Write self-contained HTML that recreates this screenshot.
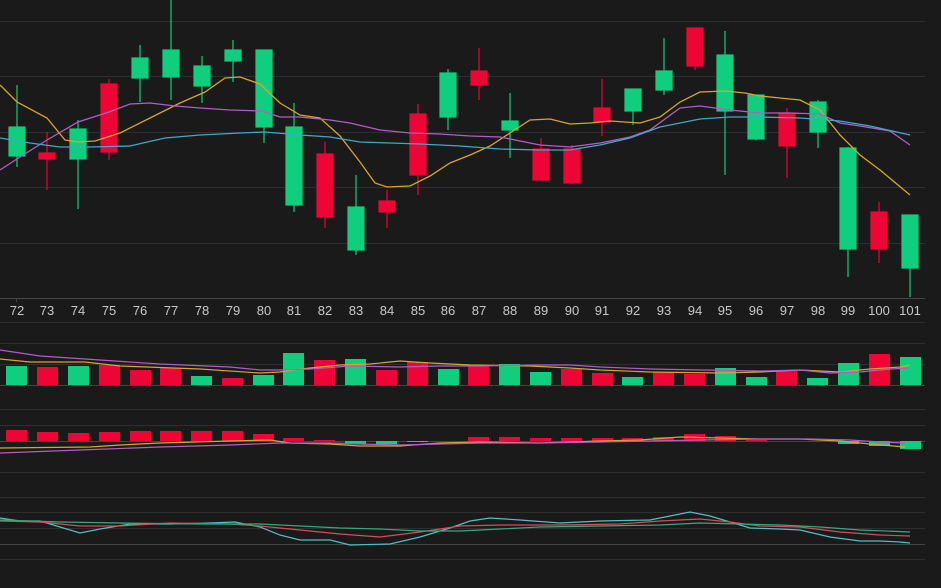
<!DOCTYPE html>
<html><head><meta charset="utf-8"><style>
html,body{margin:0;padding:0;background:#1a1a1a;width:941px;height:588px;overflow:hidden}
svg{display:block}
text{font-family:"Liberation Sans",sans-serif;font-size:13px;fill:#c8c8c8}
</style></head><body>
<svg width="941" height="588" viewBox="0 0 941 588">
<rect width="941" height="588" fill="#1a1a1a"/>
<g stroke="#2e2e2e" stroke-width="1">
<line x1="0" y1="21.5" x2="925" y2="21.5"/><line x1="0" y1="76.5" x2="925" y2="76.5"/>
<line x1="0" y1="132.5" x2="925" y2="132.5"/><line x1="0" y1="187.5" x2="925" y2="187.5"/>
<line x1="0" y1="243.5" x2="925" y2="243.5"/>
<line x1="0" y1="322.5" x2="925" y2="322.5"/><line x1="0" y1="343.5" x2="925" y2="343.5"/>
<line x1="0" y1="364.5" x2="925" y2="364.5"/>
<line x1="0" y1="409.5" x2="925" y2="409.5"/><line x1="0" y1="425.5" x2="925" y2="425.5"/>
<line x1="0" y1="472.5" x2="925" y2="472.5"/><line x1="0" y1="497.5" x2="925" y2="497.5"/>
<line x1="0" y1="512.5" x2="925" y2="512.5"/><line x1="0" y1="528.5" x2="925" y2="528.5"/>
<line x1="0" y1="559.5" x2="925" y2="559.5"/>
</g>
<g stroke="#444" stroke-width="1">
<line x1="0" y1="298.5" x2="925" y2="298.5"/><line x1="0" y1="385.5" x2="925" y2="385.5"/>
<line x1="0" y1="441.5" x2="925" y2="441.5"/><line x1="0" y1="544.5" x2="925" y2="544.5"/>
</g>
<g font-size="13" text-anchor="middle">
<text x="17" y="315">72</text><text x="47" y="315">73</text><text x="78" y="315">74</text><text x="109" y="315">75</text><text x="140" y="315">76</text><text x="171" y="315">77</text><text x="202" y="315">78</text><text x="233" y="315">79</text><text x="264" y="315">80</text><text x="294" y="315">81</text><text x="325" y="315">82</text><text x="356" y="315">83</text><text x="387" y="315">84</text><text x="418" y="315">85</text><text x="448" y="315">86</text><text x="479" y="315">87</text><text x="510" y="315">88</text><text x="541" y="315">89</text><text x="572" y="315">90</text><text x="602" y="315">91</text><text x="633" y="315">92</text><text x="664" y="315">93</text><text x="695" y="315">94</text><text x="725" y="315">95</text><text x="756" y="315">96</text><text x="787" y="315">97</text><text x="818" y="315">98</text><text x="848" y="315">99</text><text x="879" y="315">100</text><text x="910" y="315">101</text>
</g>
<!-- candles -->
<g stroke-width="1.2">
<g fill="#0fcf7f" stroke="#0fcf7f">
<line x1="17" y1="85" x2="17" y2="167"/><rect x="9" y="127" width="16" height="29"/>
<line x1="78" y1="120" x2="78" y2="209"/><rect x="70" y="129" width="16" height="30"/>
<line x1="140" y1="45" x2="140" y2="102"/><rect x="132" y="58" width="16" height="20"/>
<line x1="171" y1="0" x2="171" y2="100"/><rect x="163" y="50" width="16" height="27"/>
<line x1="202" y1="56" x2="202" y2="103"/><rect x="194" y="66" width="16" height="20"/>
<line x1="233" y1="40" x2="233" y2="82"/><rect x="225" y="50" width="16" height="11"/>
<line x1="264" y1="50" x2="264" y2="143"/><rect x="256" y="50" width="16" height="77"/>
<line x1="294" y1="103" x2="294" y2="212"/><rect x="286" y="127" width="16" height="78"/>
<line x1="356" y1="175" x2="356" y2="255"/><rect x="348" y="207" width="16" height="43"/>
<line x1="448" y1="69" x2="448" y2="130"/><rect x="440" y="73" width="16" height="44"/>
<line x1="510" y1="93" x2="510" y2="158"/><rect x="502" y="121" width="16" height="9"/>
<line x1="633" y1="89" x2="633" y2="125"/><rect x="625" y="89" width="16" height="22"/>
<line x1="664" y1="38" x2="664" y2="95"/><rect x="656" y="71" width="16" height="19"/>
<line x1="725" y1="31" x2="725" y2="175"/><rect x="717" y="55" width="16" height="56"/>
<line x1="756" y1="95" x2="756" y2="140"/><rect x="748" y="95" width="16" height="44"/>
<line x1="818" y1="100" x2="818" y2="148"/><rect x="810" y="102" width="16" height="30"/>
<line x1="848" y1="147" x2="848" y2="277"/><rect x="840" y="148" width="16" height="101"/>
<line x1="910" y1="215" x2="910" y2="297"/><rect x="902" y="215" width="16" height="53"/>
</g>
<g fill="#ee0535" stroke="#ee0535">
<line x1="47" y1="132" x2="47" y2="190"/><rect x="39" y="153" width="16" height="6"/>
<line x1="109" y1="79" x2="109" y2="160"/><rect x="101" y="84" width="16" height="68"/>
<line x1="325" y1="142" x2="325" y2="228"/><rect x="317" y="154" width="16" height="63"/>
<line x1="387" y1="190" x2="387" y2="228"/><rect x="379" y="201" width="16" height="11"/>
<line x1="418" y1="104" x2="418" y2="195"/><rect x="410" y="114" width="16" height="61"/>
<line x1="479" y1="48" x2="479" y2="100"/><rect x="471" y="71" width="16" height="14"/>
<line x1="541" y1="138" x2="541" y2="181"/><rect x="533" y="149" width="16" height="31"/>
<line x1="572" y1="145" x2="572" y2="184"/><rect x="564" y="149" width="16" height="34"/>
<line x1="602" y1="79" x2="602" y2="136"/><rect x="594" y="108" width="16" height="14"/>
<line x1="695" y1="28" x2="695" y2="70"/><rect x="687" y="28" width="16" height="38"/>
<line x1="787" y1="108" x2="787" y2="178"/><rect x="779" y="113" width="16" height="33"/>
<line x1="879" y1="202" x2="879" y2="263"/><rect x="871" y="212" width="16" height="37"/>
</g>
</g>
<!-- MA lines main -->
<g fill="none" stroke-width="1.3">
<polyline stroke="#d7a52a" points="0,85 17,102 47,118 65,140 78,142 95,141 120,133 150,118 180,103 205,92 225,78 240,77 260,84 280,103 300,115 320,118 340,136 360,162 375,183 387,187 410,186 430,176 450,163 470,155 490,146 510,133 530,120 550,119 570,124 590,123 610,121 640,123 660,117 680,102 700,92 725,91 745,93 760,96 780,98 800,100 820,110 840,135 860,155 880,170 910,195"/>
<polyline stroke="#b35cc9" points="0,170 20,157 47,140 78,122 109,112 130,104 150,103 175,106 200,108 230,110 262,111 280,117 300,117 330,120 350,123 380,130 410,133 440,134 470,136 500,137 540,145 570,147 600,143 630,137 650,130 680,108 700,106 730,110 760,113 790,113 820,114 840,123 860,126 890,131 910,145"/>
<polyline stroke="#3fa7c8" points="0,138 30,143 60,147 90,147 130,146 165,138 200,135 240,133 265,132 300,135 330,137 360,142 390,143 420,144 460,146 500,149 540,150 570,150 600,145 630,138 660,127 700,119 730,117 760,117 800,118 840,121 870,126 910,135"/>
</g>
<!-- volume -->
<g fill="#0fcf7f">
<rect x="6" y="366" width="21" height="19"/><rect x="68" y="366" width="21" height="19"/><rect x="191" y="376" width="21" height="9"/><rect x="253" y="375" width="21" height="10"/><rect x="283" y="353" width="21" height="32"/><rect x="345" y="359" width="21" height="26"/><rect x="438" y="369" width="21" height="16"/><rect x="499" y="364" width="21" height="21"/><rect x="530" y="372" width="21" height="13"/><rect x="622" y="377" width="21" height="8"/><rect x="715" y="368" width="21" height="17"/><rect x="746" y="377" width="21" height="8"/><rect x="807" y="378" width="21" height="7"/><rect x="838" y="363" width="21" height="22"/><rect x="900" y="357" width="21" height="28"/>
</g>
<g fill="#ee0535">
<rect x="37" y="367" width="21" height="18"/><rect x="99" y="365" width="21" height="20"/><rect x="130" y="370" width="21" height="15"/><rect x="160" y="368" width="21" height="17"/><rect x="222" y="378" width="21" height="7"/><rect x="314" y="360" width="21" height="25"/><rect x="376" y="370" width="21" height="15"/><rect x="407" y="362" width="21" height="23"/><rect x="468" y="366" width="21" height="19"/><rect x="561" y="369" width="21" height="16"/><rect x="592" y="373" width="21" height="12"/><rect x="653" y="372" width="21" height="13"/><rect x="684" y="374" width="21" height="11"/><rect x="776" y="371" width="21" height="14"/><rect x="869" y="354" width="21" height="31"/>
</g>
<g fill="none" stroke-width="1.2">
<polyline stroke="#d7a52a" points="0,359 30,362 85,362 120,366 200,369 260,373 280,372 300,369 340,365 370,364 400,361 430,363 470,365 530,366 570,368 600,370 650,372 720,373 760,372 800,370 840,372 870,369 900,367 910,365"/>
<polyline stroke="#b35cc9" points="0,350 40,356 100,360 160,364 230,367 260,370 280,370 310,369 350,366 400,367 440,366 480,366 540,365 570,365 600,367 650,369 700,370 760,371 800,370 830,373 860,372 890,369 910,368"/>
</g>
<!-- MACD -->
<g fill="#ee0535">
<rect x="6" y="430" width="21" height="11"/><rect x="37" y="432" width="21" height="9"/><rect x="68" y="433" width="21" height="8"/><rect x="99" y="432" width="21" height="9"/><rect x="130" y="431" width="21" height="10"/><rect x="160" y="431" width="21" height="10"/><rect x="191" y="431" width="21" height="10"/><rect x="222" y="431" width="21" height="10"/><rect x="253" y="434" width="21" height="7"/><rect x="283" y="438" width="21" height="3"/><rect x="314" y="440" width="21" height="1"/><rect x="468" y="437" width="21" height="4"/><rect x="499" y="437" width="21" height="4"/><rect x="530" y="438" width="21" height="3"/><rect x="561" y="438" width="21" height="3"/><rect x="592" y="438" width="21" height="3"/><rect x="622" y="438" width="21" height="3"/><rect x="653" y="437" width="21" height="4"/><rect x="684" y="434" width="21" height="7"/><rect x="715" y="436" width="21" height="5"/><rect x="746" y="440" width="21" height="1"/>
</g>
<g fill="#0fcf7f">
<rect x="345" y="441" width="21" height="3"/><rect x="376" y="441" width="21" height="3"/><rect x="407" y="441" width="21" height="1"/><rect x="838" y="441" width="21" height="3"/><rect x="869" y="441" width="21" height="5"/><rect x="900" y="441" width="21" height="8"/>
</g>
<g fill="none" stroke-width="1.2">
<polyline stroke="#d7a52a" points="0,448 90,447 120,445 160,443 230,441 270,440 290,443 330,444 360,446 400,446 440,443 480,442 540,443 600,441 640,440 680,437 720,438 760,439 800,439 840,441 870,444 905,447"/>
<polyline stroke="#b35cc9" points="0,453 80,450 160,447 230,445 280,443 330,443 360,444 400,445 440,444 480,443 540,443 600,442 650,441 700,440 760,439 810,439 850,440 880,442 905,443"/>
</g>
<!-- bottom lines -->
<g fill="none" stroke-width="1.2">
<polyline stroke="#4ec0c8" points="0,518 20,521 40,521 60,527 80,533 100,529 130,524 170,524 210,523 235,522 260,527 280,535 300,540 330,540 350,545 390,544 420,537 450,528 470,521 490,518 520,520 560,523 600,521 650,520 690,512 710,516 730,522 750,528 780,529 800,530 830,537 860,541 880,541 900,542 910,543"/>
<polyline stroke="#d84b5a" points="0,521 40,522 80,526 120,526 170,523 230,524 260,526 300,530 340,534 380,537 420,532 460,526 500,525 560,525 620,524 660,521 700,519 730,522 760,526 800,527 840,532 880,535 910,536"/>
<polyline stroke="#35a880" points="0,520 60,522 120,523 200,524 260,524 300,526 340,528 380,529 420,531 460,531 500,529 540,527 600,526 660,525 700,523 740,524 780,525 820,527 860,530 910,532"/>
</g>
<g stroke="#444" stroke-width="1">
<line x1="16.5" y1="298" x2="16.5" y2="302"/>
</g>
</svg>
</body></html>
